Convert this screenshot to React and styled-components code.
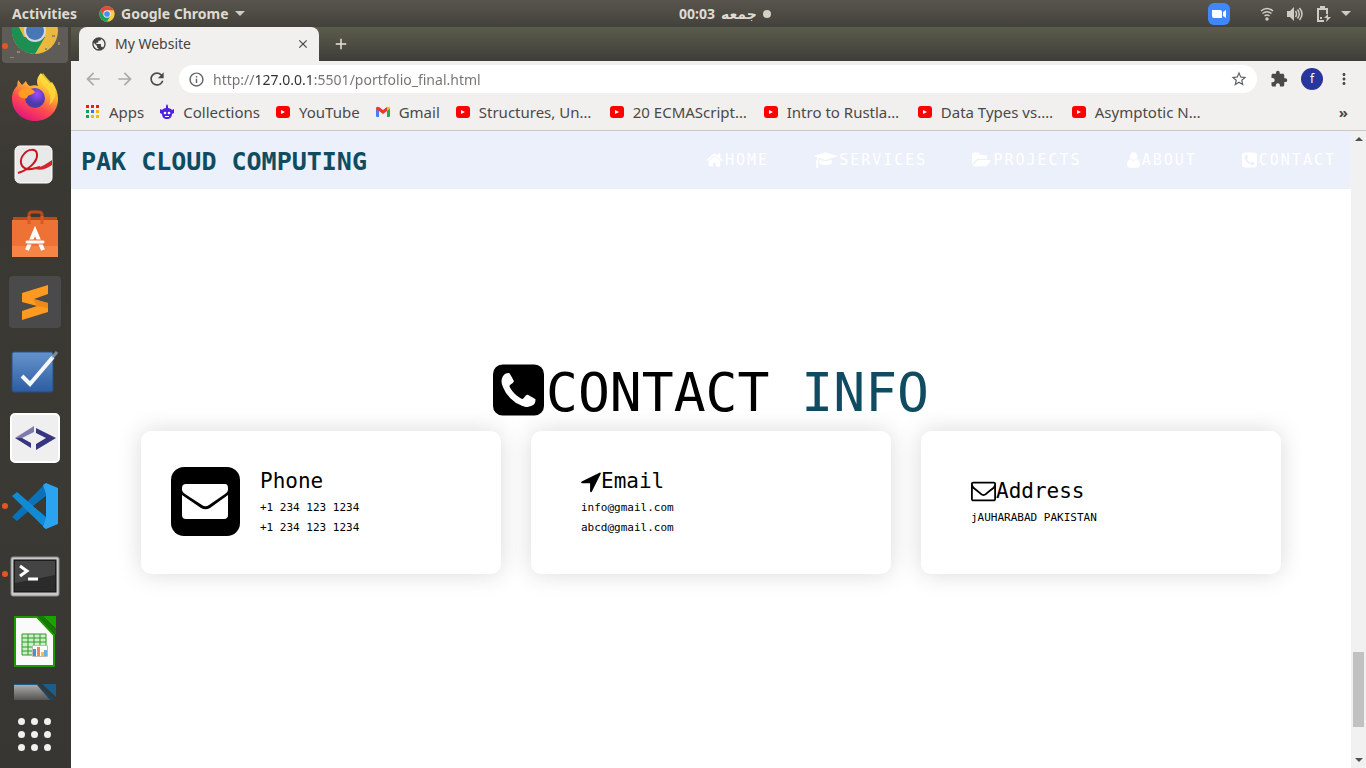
import React from "react";
import styled, { createGlobalStyle } from "styled-components";
import {
  MdArrowBack, MdArrowForward, MdRefresh, MdStarBorder, MdExtension,
  MdMoreVert, MdPublic, MdInfoOutline, MdClose, MdAdd,
} from "react-icons/md";

const ui = `"Noto Sans", "Open Sans", "DejaVu Sans", sans-serif`;
const mono = `"DejaVu Sans Mono", "Liberation Mono", monospace`;

const GlobalStyle = createGlobalStyle`
  * { box-sizing: border-box; }
  body { margin: 0; font-family: ${ui}; background: #fff; }
  button { border: 0; background: none; padding: 0; margin: 0; font: inherit; color: inherit; cursor: pointer; }
  a { color: inherit; text-decoration: none; }
  h1, h2, h3, p { margin: 0; font-weight: 400; }
  svg { display: block; flex: none; }
`;

/* ---------- desktop shell ---------- */
const Desktop = styled.div`
  height: 100vh;
  display: flex;
  flex-direction: column;
  overflow: hidden;
`;
const TopPanel = styled.header`
  flex: none;
  height: 27px;
  padding: 0 15px 0 7px;
  display: grid;
  grid-template-columns: 1fr 1fr;
  align-items: center;
  background: linear-gradient(#59554e, #43413b);
  color: #dfdbd2;
  font-size: 14px;
  font-weight: 700;
  line-height: 20px;
`;
const PanelLeft = styled.div`
  display: flex;
  align-items: center;
  gap: 22px;
  padding-left: 5px;
`;
const PanelButton = styled.button`
  display: flex;
  align-items: center;
  gap: 6px;
`;
const PanelRight = styled.div`
  display: flex;
  align-items: center;
`;
const Tray = styled.div`
  margin-left: auto;
  display: flex;
  align-items: center;
`;
const TrayButton = styled.button`
  margin-left: ${(p) => p.$gap}px;
`;
const Clock = styled.button`
  display: flex;
  align-items: center;
  gap: 6px;
`;
const ClockDot = styled.span`
  width: 8px;
  height: 8px;
  border-radius: 50%;
  background: #d5d1c9;
`;
const Workspace = styled.div`
  flex: 1;
  min-height: 0;
  display: flex;
`;

/* ---------- dock ---------- */
const Dock = styled.nav`
  flex: none;
  width: 71px;
  display: flex;
  flex-direction: column;
  overflow: hidden;
  background: linear-gradient(#46433b, #3a3833 20%, #3b3934 60%, #383632);
`;
const DockSlot = styled.button`
  flex: none;
  position: relative;
  width: 71px;
  height: ${(p) => p.$h || 68}px;
  overflow: hidden;
`;
const Running = styled.span`
  position: absolute;
  left: 2px;
  top: 50%;
  width: 6px;
  height: 6px;
  margin-top: -3px;
  border-radius: 50%;
  background: #e95420;
`;
const AppsGrid = styled.button`
  margin: auto auto 17px 18px;
  display: grid;
  grid-template-columns: repeat(3, 7px);
  gap: 6px;
`;
const GridDot = styled.span`
  width: 7px;
  height: 7px;
  border-radius: 50%;
  background: #f1f0ee;
`;

/* ---------- browser ---------- */
const Browser = styled.div`
  flex: 1;
  min-width: 0;
  display: flex;
  flex-direction: column;
`;
const TabStrip = styled.div`
  flex: none;
  height: 34px;
  display: flex;
  align-items: center;
  padding-left: 8px;
  background: linear-gradient(#5a5c4c, #3f3d38);
`;
const Tab = styled.div`
  width: 240px;
  height: 34px;
  padding: 0 9px 0 12px;
  display: flex;
  align-items: center;
  gap: 8px;
  border-radius: 8px 8px 0 0;
  background: #f2f0ef;
  color: #45433f;
  font-size: 14px;
`;
const TabTitle = styled.span`
  flex: 1;
  line-height: 20px;
`;
const NewTab = styled.button`
  margin-left: 13px;
  color: #e6e3dc;
`;
const Toolbar = styled.div`
  flex: none;
  height: 36px;
  padding: 0 13px 0 12px;
  display: flex;
  align-items: center;
  background: #f2f0ef;
`;
const ToolButton = styled.button`
  display: flex;
  align-items: center;
  justify-content: center;
  width: 20px;
  height: 20px;
  margin-right: 12px;
  color: ${(p) => (p.$dim ? "#adaba9" : "#4b4947")};
`;
const Omnibox = styled.label`
  flex: 1;
  height: 28px;
  margin-right: 12px;
  padding: 0 9px;
  display: flex;
  align-items: center;
  gap: 8px;
  border-radius: 14px;
  background: #fff;
  color: #5f6368;
`;
const UrlInput = styled.input`
  flex: 1;
  min-width: 0;
  height: 20px;
  border: 0;
  padding: 0;
  outline: 0;
  font: 14px ${ui};
  color: transparent;
  background: linear-gradient(to right, #74716e 41px, #33312f 41px, #33312f 98px, #74716e 98px);
  -webkit-background-clip: text;
  background-clip: text;
`;
const Avatar = styled.button`
  width: 22px;
  height: 22px;
  margin-right: 12px;
  border-radius: 50%;
  background: #28359b;
  color: #fff;
  font-size: 12px;
  line-height: 22px;
`;
const Bookmarks = styled.div`
  flex: none;
  height: 34px;
  padding: 0 18px 4px 14px;
  display: flex;
  align-items: center;
  gap: 15px;
  background: #f2f0ef;
  border-bottom: 1px solid #cac8c6;
  color: #4b4947;
  font-size: 15px;
`;
const Bookmark = styled.a`
  display: flex;
  align-items: center;
  gap: 8px;
  width: ${(p) => (p.$fixed ? "139px" : "auto")};
  line-height: 20px;
  white-space: nowrap;
`;
const More = styled.button`
  margin-left: auto;
  font-weight: 700;
`;
const Viewport = styled.div`
  flex: 1;
  min-height: 0;
  display: flex;
`;
const Scrollbar = styled.div`
  flex: none;
  width: 15px;
  padding: 6px 2px;
  display: flex;
  flex-direction: column;
  align-items: stretch;
  background: #f1f1f1;
`;
const ScrollArrow = styled.span`
  align-self: center;
  border: 4px solid transparent;
  border-top-width: ${(p) => (p.$up ? 0 : 4)}px;
  border-bottom-width: ${(p) => (p.$up ? 4 : 0)}px;
  border-top-color: #505050;
  border-bottom-color: #505050;
`;
const Thumb = styled.span`
  height: 75px;
  margin: auto 0 31px;
  background: #c1c1c1;
`;

/* ---------- web page ---------- */
const Page = styled.div`
  flex: 1;
  min-width: 0;
  overflow: hidden;
  background: #fff;
  font-family: ${mono};
  color: #000;
`;
const SiteHeader = styled.header`
  height: 58px;
  padding: 0 15px 0 10px;
  display: flex;
  align-items: center;
  justify-content: space-between;
  background: #ecf0fa;
`;
const Brand = styled.a`
  padding-top: 3px;
  font-size: 25px;
  font-weight: 700;
  line-height: 32px;
  color: #0f4c61;
`;
const SiteNav = styled.nav`
  display: flex;
  gap: 45px;
`;
const NavLink = styled.a`
  display: flex;
  align-items: center;
  gap: 2px;
  font-size: 15px;
  line-height: 20px;
  letter-spacing: 2px;
  color: #fff;
`;
const Contact = styled.section`
  padding: 160px 70px 0;
`;
const Heading = styled.h1`
  height: 82px;
  display: flex;
  align-items: center;
  justify-content: center;
  gap: 2px;
  font-size: 53px;
  line-height: 64px;
`;
const HeadingText = styled.span`
  padding-top: 6px;
`;
const Accent = styled.span`
  color: #0f4c61;
`;
const Cards = styled.div`
  display: grid;
  grid-template-columns: repeat(3, 1fr);
  gap: 30px;
`;
const Card = styled.article`
  padding: 36px 30px;
  display: flex;
  align-items: center;
  gap: 20px;
  border-radius: 10px;
  background: #fff;
  box-shadow: 0 0 25px rgba(0, 0, 0, 0.15);
`;
const CardIcon = styled.span`
  padding-bottom: 2px;
`;
const CardTitle = styled.h3`
  display: flex;
  align-items: center;
  padding-bottom: 2px;
  font-size: 21px;
  line-height: 29px;
`;
const CardLine = styled.p`
  font-size: 11px;
  line-height: 20px;
`;

/* ---------- glyphs ---------- */
const glyphs = {
  home: ["64 0 1664 1792", "M1472 992v480q0 26-19 45t-45 19h-384v-384h-256v384h-384q-26 0-45-19t-19-45v-480q0-1 .5-3t.5-3l575-474 575 474q1 2 1 6zm223-69l-62 74q-8 9-21 11h-3q-13 0-21-7l-692-577-692 577q-12 8-24 7-13-2-21-11l-62-74q-8-10-7-23.500t11-21.500l719-599q32-26 76-26t76 26l244 204v-195q0-14 9-23t23-9h192q14 0 23 9t9 23v408l219 182q10 8 11 21.500t-7 23.500z"],
  cap: ["0 0 2304 1792", "M1774 836l18 316q4 69-82 128t-235 93.500-323 34.500-323-34.500-235-93.500-82-128l18-316 574 181q22 7 48 7t48-7zm530-324q0 23-22 31l-1120 352q-4 1-10 1t-10-1l-652-206q-43 34-71 111.500t-34 178.500q63 36 63 109 0 69-58 107l58 433q2 14-8 25-9 11-24 11h-192q-15 0-24-11-10-11-8-25l58-433q-58-38-58-107 0-73 65-111 11-207 98-330l-333-104q-22-8-22-31t22-31l1120-352q4-1 10-1t10 1l1120 352q22 8 22 31z"],
  folder: ["0 0 1920 1792", "M1879 952q0 31-31 66l-336 396q-43 51-120.500 86.500t-143.500 35.500h-1088q-34 0-60.500-13t-26.500-43q0-31 31-66l336-396q43-51 120.500-86.500t143.500-35.500h1088q34 0 60.500 13t26.500 43zm-343-344v160h-832q-94 0-197 47.500t-164 119.500l-337 396-5 6q0-4-.5-12.500t-.5-12.500v-960q0-92 66-158t158-66h320q92 0 158 66t66 158v32h544q92 0 158 66t66 158z"],
  user: ["256 0 1280 1792", "M1536 1399q0 109-62.500 187t-150.500 78h-854q-88 0-150.500-78t-62.500-187q0-85 8.500-160.500t31.500-152 58.500-131 94-89 134.500-34.500q131 128 313 128t313-128q76 0 134.500 34.500t94 89 58.500 131 31.500 152 8.500 160.500zm-256-887q0 159-112.500 271.500t-271.500 112.500-271.500-112.500-112.500-271.500 112.500-271.500 271.500-112.500 271.500 112.500 112.500 271.500z"],
  phone: ["128 0 1536 1792", "M1408 1193q0-11-2-16t-18-16.500-40.500-25-47.500-26.500-45.500-25-28.500-15.500q-5-3-19-13t-25-15-21-5q-15 0-36.500 20.500t-39.500 45-38.500 45-33.500 20.500q-7 0-16.500-3.500t-15.500-6.500-17-9.500-14-8.500q-99-55-170-126.500t-127-170.500q-2-3-8.500-14t-9.500-17-6.500-15.500-3.500-16.500q0-13 20.500-33.500t45-38.500 45-39.500 20.500-36.500q0-10-5-21t-15-25-13-19q-3-6-15-28.500t-25-45.500-26.500-47.500-25-40.500-16.500-18-16-2q-48 0-101 22-46 21-80 94.500t-34 130.500q0 16 2.500 34t5 30.500 9 33 10 29.500 12.500 33 11 30q60 164 216.500 320.500t320.500 216.500q6 2 30 11t33 12.500 29.500 10 33 9 30.500 5 34 2.500q57 0 130.500-34t94.500-80q22-53 22-101zm256-777v960q0 119-84.500 203.500t-203.500 84.500h-960q-119 0-203.500-84.500t-84.500-203.500v-960q0-119 84.500-203.500t203.500-84.500h960q119 0 203.500 84.500t84.500 203.500z"],
  arrow: ["192 0 1408 1792", "M1593 349l-640 1280q-17 35-57 35-5 0-15-2-22-5-35.500-22.500t-13.500-39.500v-576h-576q-22 0-39.500-13.500t-22.500-35.500 4-42 29-30l1280-640q13-7 29-7 27 0 45 19 15 14 18.500 34.500t-6.500 39.500z"],
  mail: ["0 64 1792 1792", "M1664 1504v-768q-32 36-69 66-268 206-426 338-51 43-83 67t-86.500 48.500-102.500 24.500h-2q-48 0-102.500-24.500t-86.500-48.500-83-67q-158-132-426-338-37-30-69-66v768q0 13 9.500 22.500t22.500 9.500h1472q13 0 22.500-9.500t9.500-22.500zm0-1051v-24.500l-.5-13-3-12.500-5.500-9-9-7.500-14-2.500h-1472q-13 0-22.500 9.500t-9.500 22.500q0 168 147 284 193 152 401 317 6 5 35 29.500t46 37.500 44.500 31.500 50.500 27.500 43 9h2q20 0 43-9t50.500-27.500 44.500-31.500 46-37.500 35-29.500q208-165 401-317 54-43 100.500-115.500t46.500-131.500zm128-37v1088q0 66-47 113t-113 47h-1472q-66 0-113-47t-47-113v-1088q0-66 47-113t113-47h1472q66 0 113 47t47 113z"],
};
function Glyph({ name, size }) {
  const [box, d] = glyphs[name];
  const width = Math.round((Number(box.split(" ")[2]) / 1792) * size);
  return (
    <svg width={width} height={size} viewBox={box} fill="currentColor" aria-hidden="true">
      <path d={d} />
    </svg>
  );
}
const EnvelopeSquare = () => (
  <svg width="69" height="69" viewBox="0 0 69 69" aria-hidden="true">
    <rect width="69" height="69" rx="13" />
    <path fill="#fff" d="M15 17h39q3 0 3 4v2q0 2-3 4L38 38q-3.500 2.500-7 0L14 27q-3-2-3-4v-2q0-4 4-4zM11 28l19 13q4.500 2.500 9 0L57 28v20q0 4-4 4H15q-4 0-4-4z" />
  </svg>
);

const ChromeMark = ({ size }) => (
  <svg width={size} height={size} viewBox="0 0 48 48" aria-hidden="true">
    <circle cx="24" cy="24" r="23" fill="#ffcd41" />
    <path fill="#dd4b3e" d="M4.100 12.500A23 23 0 0 1 43.900 12.500H24L14 29.700z" />
    <path fill="#19a15f" d="M4.100 12.500A23 23 0 0 0 24 47L34 29.700 14 29.700z" />
    <circle cx="24" cy="24" r="11" fill="#f1f1f1" />
    <circle cx="24" cy="24" r="8.500" fill="#4c8bf5" />
  </svg>
);

/* ---------- dock icons: 71x68 slots ---------- */
const Slot = ({ children, h = 68 }) => (
  <svg width="71" height={h} viewBox={`0 0 71 ${h}`} aria-hidden="true">{children}</svg>
);
const DockChrome = () => (
  <Slot h={37}>
    <rect x="2" y="-10" width="66" height="46" rx="4" fill="#5f5c57" />
    <circle cx="35" cy="4" r="23" fill="#e8b93c" />
    <path fill="#1d8f52" d="M15-7.500A23 23 0 0 0 35 27L45 10 24 10z" />
    <circle cx="35" cy="4" r="11" fill="#d5d8dc" />
    <circle cx="35" cy="4" r="9" fill="#4877b8" />
    <path d="M17 24h3v2h-3zM52 8h3v2h-3zM58 15h2v3h-2zM10 30h4v1h-4zM45 21h2v2h-2z" fill="#9a8563" />
  </Slot>
);
const DockFirefox = () => (
  <Slot>
    <defs>
      <linearGradient id="ffBody" x1="0.8" y1="0" x2="0.3" y2="1">
        <stop offset="0" stopColor="#fff44f" /><stop offset=".35" stopColor="#ffb42c" />
        <stop offset=".65" stopColor="#ff4f4d" /><stop offset="1" stopColor="#e3107f" />
      </linearGradient>
      <radialGradient id="ffCore" cx=".6" cy=".3"><stop offset="0" stopColor="#9f4bff" /><stop offset="1" stopColor="#4b3aa8" /></radialGradient>
    </defs>
    <path fill="url(#ffBody)" d="M41 9c3 5 7 7 9 11l2-2c4 6 6 11 6 17 0 13-10 22-23 22S12 47 12 35c0-6 2-10 5-13l1-6c2 2 3 4 4 5l4-4c1 3 2 4 4 5 4-1 6-1 8 0-2-4-1-9 3-13z" />
    <circle cx="35" cy="34" r="10" fill="url(#ffCore)" />
    <path fill="#ff9b22" d="M18 29c3-5 11-6 15-3l2 2c-2 3-5 2-7 4-1 3-3 3-5 2-3 0-4-2-5-5z" />
    <path fill="#ffd93a" d="M43 21c7 5 9 13 6 20 5-3 8-11 5-18-2-5-7-8-11-14-3 4-3 8 0 12z" opacity=".8" />
  </Slot>
);
const DockPdf = () => (
  <Slot>
    <rect x="15" y="14" width="37" height="37" rx="5" fill="#e9e9e9" stroke="#fff" />
    <path fill="none" stroke="#c9151e" strokeWidth="2" d="M18 41C28 38 38 30 37 22c-1-6-9-5-13 0-5 6-4 13 3 15 5 1 9-1 13-2" />
    <path fill="#d2262c" d="M32 36c8 0 13-3 20-8v5c-7 5-13 6-20 3z" />
  </Slot>
);
const DockSoftware = () => (
  <Slot>
    <path fill="none" stroke="#b84a1c" strokeWidth="3" d="M29 23v-8q0-3 3-3h7q3 0 3 3v8" />
    <path fill="#bd4a17" d="M13 17h44v6H13z" />
    <path fill="#ee7136" d="M12 20h46v37H12z" />
    <path fill="#f58446" d="M12 46h46v11H12z" />
    <path fill="none" stroke="#d65a22" strokeWidth="3" d="M29 24v-8M42 24v-8" />
    <path fill="none" stroke="#fff" strokeWidth="4" d="M27 50l8-19 8 19" />
    <rect x="25" y="40" width="20" height="4" rx="2" fill="#fff" stroke="#ee7136" />
  </Slot>
);
const DockSublime = () => (
  <Slot>
    <rect x="9" y="8" width="52" height="52" rx="4" fill="#4a4a4a" />
    <path fill="#ff9a20" d="M22 25l26-8v9l-14 5 14 4v9l-26 8v-9l15-5-15-4z" />
    <path fill="#d97a12" d="M33 31l15 4v5l-11-2z" opacity=".5" />
  </Slot>
);
const DockTasks = () => (
  <Slot>
    <defs><linearGradient id="taskBlue" x2="0" y2="1"><stop stopColor="#6593cb" /><stop offset="1" stopColor="#2c5da3" /></linearGradient></defs>
    <rect x="12" y="16" width="41" height="40" rx="2" fill="url(#taskBlue)" stroke="#284f86" />
    <path fill="none" stroke="#f5f7fa" strokeWidth="4" d="M22 40l8 8 23-27" />
    <path stroke="#a9bfd9" strokeWidth="3" d="M52 22l5-6" opacity=".6" />
  </Slot>
);
const DockCode = () => (
  <Slot>
    <rect x="11" y="10" width="48" height="48" rx="4" fill="#efefef" stroke="#fff" strokeWidth="2" />
    <path fill="#7d7aae" d="M34 22v6l-12 6h-7z" />
    <path fill="#37357f" d="M15 34l16 10v-5l-9-5zM36 24l20 10-20 12v-6l10-6-10-5z" />
  </Slot>
);
const DockVscode = () => (
  <Slot>
    <path fill="#0b71b9" d="M12 45l5 4 29-25V11z" />
    <path fill="#118bd4" d="M12 24l5-4 29 25v12z" />
    <path fill="#2ba3ef" d="M46 11l12 5v36l-12 5-3-2 3-9V22l-3-9z" />
    <path fill="#3b3934" d="M46 24v20L33 34z" />
  </Slot>
);
const DockTerminal = () => (
  <Slot>
    <rect x="11" y="17" width="48" height="39" rx="2" fill="#c9c9c9" stroke="#8d8d8d" />
    <rect x="14" y="20" width="42" height="32" fill="#2b2b2b" stroke="#111" />
    <path fill="#444" d="M15 21h40v14L15 43z" />
    <path fill="none" stroke="#fff" strokeWidth="3" d="M20 26l7 5-7 5M28 39h10" />
  </Slot>
);
const DockCalc = () => (
  <Slot>
    <path fill="#fafafa" stroke="#1c9a00" strokeWidth="2" d="M15 9h22l17 18v31H15z" />
    <path fill="#147c00" d="M37 8l19 19v-5L43 8z" />
    <path fill="#1aa300" d="M43 8h13v13z" />
    <path fill="#cfeeca" stroke="#2f9a28" d="M22 26h24v21H22zM22 30h24M22 34h24M22 39h24M22 43h24M28 26v21M34 26v21M40 26v21" />
    <path fill="#fff" stroke="#bbb" d="M32.500 37.500h15v11h-15z" />
    <path fill="#4a90cf" d="M33 41h3v7h-3z" /><path fill="#ea8a55" d="M37 39h3v9h-3z" />
    <path fill="#f0c04a" d="M41 44h3v4h-3z" /><path fill="#67b0dd" d="M44 42h3v6h-3z" />
  </Slot>
);
const DockWriter = () => (
  <Slot h={26}>
    <defs><linearGradient id="writerFade" x2="0" y2="1"><stop stopColor="#a9aaaa" /><stop offset="1" stopColor="#55534f" /></linearGradient></defs>
    <path fill="url(#writerFade)" d="M14 9h24l14 15H14z" />
    <path fill="#1b5e8a" d="M14 8h24v1H14zM42 8h14v13z" />
    <path fill="#1f455e" d="M38 8l17 16h-5L37 9z" />
  </Slot>
);
const dockApps = [
  ["Google Chrome", DockChrome, 37, true], ["Firefox", DockFirefox], ["Document Viewer", DockPdf],
  ["Software", DockSoftware], ["Sublime Text", DockSublime], ["Tasks", DockTasks], ["Code Editor", DockCode],
  ["Visual Studio Code", DockVscode, 68, true], ["Terminal", DockTerminal, 68, true],
  ["Calc", DockCalc], ["Writer", DockWriter, 26],
];

/* ---------- bookmark icons ---------- */
const AppsIcon = () => (
  <svg width="16" height="16" viewBox="0 0 16 16" aria-hidden="true">
    <path fill="#e2231a" d="M1 1h3v3H1zM6 1h3v3H6zM11 1h3v3h-3z" />
    <path fill="#12a150" d="M1 6h3v3H1zM1 11h3v3H1z" />
    <path fill="#3f6df0" d="M6 6h3v3H6z" />
    <path fill="#f5b90f" d="M11 6h3v3h-3zM6 11h3v3H6zM11 11h3v3h-3z" />
  </svg>
);
const RobotIcon = () => (
  <svg width="16" height="16" viewBox="0 0 16 16" aria-hidden="true">
    <path fill="#4f22e0" d="M7 2l1-2 1 2v2c2 0 3 1 4 2l2-1v4l-2 1c0 3-2 5-5 5s-5-2-5-5L1 9V5l2 1c1-1 2-2 4-2z" />
    <circle cx="6" cy="9" r="1.300" fill="#fff" /><circle cx="10" cy="9" r="1.300" fill="#fff" />
    <path stroke="#fff" d="M6 12.500h4" />
  </svg>
);
const TubeIcon = () => (
  <svg width="16" height="16" viewBox="0 0 16 16" aria-hidden="true">
    <rect x="1" y="2" width="14" height="12" rx="3" fill="#f00" />
    <path fill="#fff" d="M6 6l4 2-4 2z" />
  </svg>
);
const GmailIcon = () => (
  <svg width="16" height="16" viewBox="0 0 16 16" aria-hidden="true">
    <path fill="#4b7bf5" d="M1 4h3v9H2q-1 0-1-1z" />
    <path fill="#26a84c" d="M12 4h3v8q0 1-1 1h-2z" />
    <path fill="#e33b2e" d="M1 4q1-2 3-1l4 3 4-3v4l-4 3-4-3-3-2z" />
    <path fill="#fbbc05" d="M12 3q2-1 3 1v1l-3 2z" />
  </svg>
);
const bookmarks = [
  ["Apps", AppsIcon], ["Collections", RobotIcon], ["YouTube", TubeIcon], ["Gmail", GmailIcon],
  ["Structures, Un…", TubeIcon, true], ["20 ECMAScript…", TubeIcon, true],
  ["Intro to Rustla…", TubeIcon, true], ["Data Types vs.…", TubeIcon, true],
  ["Asymptotic N…", TubeIcon, true],
];

/* ---------- tray icons ---------- */
const Caret = () => (
  <svg width="10" height="6" viewBox="0 0 10 6" aria-hidden="true"><path fill="#cfccc4" d="M0 0h10L5 5z" /></svg>
);
const ZoomIcon = () => (
  <svg width="22" height="22" viewBox="0 0 22 22" aria-hidden="true">
    <rect width="22" height="22" rx="6" fill="#4087fc" />
    <path fill="#fff" d="M4 7h8q2 0 2 2v6H6q-2 0-2-2zM15 9l3-2v8l-3-2z" />
  </svg>
);
const WifiIcon = () => (
  <svg width="14" height="14" viewBox="0 0 14 14" fill="none" stroke="#cfccc4" strokeWidth="1.500" aria-hidden="true">
    <path d="M1 4q6-5 12 0M2.500 6.500q4.500-3.500 9 0M4.500 9q2.500-2 5 0" /><circle cx="7" cy="12" r="1.700" fill="#cfccc4" stroke="none" />
  </svg>
);
const VolumeIcon = () => (
  <svg width="16" height="14" viewBox="0 0 16 14" fill="none" stroke="#cfccc4" strokeWidth="1.500" aria-hidden="true">
    <path fill="#cfccc4" stroke="none" d="M0 4h3l4-4v14l-4-4H0z" /><path d="M8.500 4q2 3 0 6M10.500 2.500q3.500 4.500 0 9M12.500 1q5 6 0 12" />
  </svg>
);
const BatteryIcon = () => (
  <svg width="15" height="16" viewBox="0 0 15 16" fill="none" stroke="#cfccc4" strokeWidth="2" aria-hidden="true">
    <path d="M8 15H2V3h9v5M4 1h5" /><path fill="#cfccc4" stroke="none" d="M12 8l-4 4h3l-1 4 5-5h-3zM4 11h2v2H4z" />
  </svg>
);

const navItems = [["home", "HOME"], ["cap", "SERVICES"], ["folder", "PROJECTS"], ["user", "ABOUT"], ["phone", "CONTACT"]];
const cards = [
  { title: "Phone", big: true, lines: ["+1 234 123 1234", "+1 234 123 1234"] },
  { title: "Email", icon: "arrow", lines: ["info@gmail.com", "abcd@gmail.com"] },
  { title: "Address", icon: "mail", lines: ["jAUHARABAD PAKISTAN"] },
];

export default function App() {
  return (
    <Desktop>
      <GlobalStyle />
      <TopPanel>
        <PanelLeft>
          <PanelButton>Activities</PanelButton>
          <PanelButton><ChromeMark size={16} />Google Chrome<Caret /></PanelButton>
        </PanelLeft>
        <PanelRight>
          <Clock><span>00:03</span><span lang="ur">جمعه</span><ClockDot /></Clock>
          <Tray>
            <TrayButton $gap={0} aria-label="Zoom"><ZoomIcon /></TrayButton>
            <TrayButton $gap={30} aria-label="Network"><WifiIcon /></TrayButton>
            <TrayButton $gap={13} aria-label="Volume"><VolumeIcon /></TrayButton>
            <TrayButton $gap={13} aria-label="Battery"><BatteryIcon /></TrayButton>
            <TrayButton $gap={10} aria-label="System menu"><Caret /></TrayButton>
          </Tray>
        </PanelRight>
      </TopPanel>
      <Workspace>
        <Dock aria-label="Dock">
          {dockApps.map(([label, Icon, h, running]) => (
            <DockSlot key={label} $h={h} aria-label={label}>
              <Icon />
              {running && <Running />}
            </DockSlot>
          ))}
          <AppsGrid aria-label="Show applications">
            {Array.from({ length: 9 }, (_, i) => <GridDot key={i} />)}
          </AppsGrid>
        </Dock>
        <Browser>
          <TabStrip>
            <Tab>
              <MdPublic size={16} />
              <TabTitle>My Website</TabTitle>
              <button aria-label="Close tab"><MdClose size={14} /></button>
            </Tab>
            <NewTab aria-label="New tab"><MdAdd size={18} /></NewTab>
          </TabStrip>
          <Toolbar>
            <ToolButton $dim aria-label="Back"><MdArrowBack size={20} /></ToolButton>
            <ToolButton $dim aria-label="Forward"><MdArrowForward size={20} /></ToolButton>
            <ToolButton aria-label="Reload"><MdRefresh size={20} /></ToolButton>
            <Omnibox>
              <MdInfoOutline size={17} />
              <UrlInput aria-label="Address" defaultValue="http://127.0.0.1:5501/portfolio_final.html" />
              <button aria-label="Bookmark this page"><MdStarBorder size={18} /></button>
            </Omnibox>
            <ToolButton aria-label="Extensions"><MdExtension size={18} /></ToolButton>
            <Avatar aria-label="Profile">f</Avatar>
            <button aria-label="Menu"><MdMoreVert size={18} color="#4b4947" /></button>
          </Toolbar>
          <Bookmarks>
            {bookmarks.map(([label, Icon, fixed]) => (
              <Bookmark key={label} href="#" $fixed={fixed}><Icon />{label}</Bookmark>
            ))}
            <More aria-label="More bookmarks">»</More>
          </Bookmarks>
          <Viewport>
            <Page>
              <SiteHeader>
                <Brand href="#">PAK CLOUD COMPUTING</Brand>
                <SiteNav>
                  {navItems.map(([icon, label]) => (
                    <NavLink key={label} href="#"><Glyph name={icon} size={18} />{label}</NavLink>
                  ))}
                </SiteNav>
              </SiteHeader>
              <Contact>
                <Heading>
                  <Glyph name="phone" size={60} />
                  <HeadingText>CONTACT <Accent>INFO</Accent></HeadingText>
                </Heading>
                <Cards>
                  {cards.map((c) => (
                    <Card key={c.title}>
                      <CardIcon>{c.big && <EnvelopeSquare />}</CardIcon>
                      <div>
                        <CardTitle>{c.icon && <Glyph name={c.icon} size={25} />}{c.title}</CardTitle>
                        {c.lines.map((line, i) => <CardLine key={i}>{line}</CardLine>)}
                      </div>
                    </Card>
                  ))}
                </Cards>
              </Contact>
            </Page>
            <Scrollbar aria-hidden="true">
              <ScrollArrow $up />
              <Thumb />
              <ScrollArrow />
            </Scrollbar>
          </Viewport>
        </Browser>
      </Workspace>
    </Desktop>
  );
}
